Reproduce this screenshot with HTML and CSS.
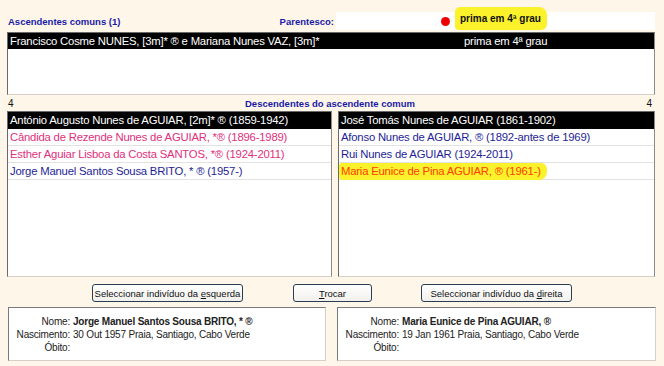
FILE: index.html
```html
<!DOCTYPE html>
<html lang="pt">
  <head>
    <meta charset="UTF-8" />
    <title>Parentesco</title>
    <link rel="stylesheet" href="styles.css">
  </head>
  <body>
    <div class="app">
      <div class="head-row">
        <span class="label title">Ascendentes comuns (1)</span>
        <span class="label parent-label">Parentesco:</span>
        <div class="parent-field">
          <span class="dot"></span>
          <span class="marker">prima em 4ª grau</span>
        </div>
      </div>

      <div class="listbox common">
        <div class="row selected">
          <span class="couple">Francisco Cosme NUNES, [3m]* ® e Mariana Nunes VAZ, [3m]*</span>
          <span class="degree">prima em 4ª grau</span>
        </div>
      </div>

      <div class="count-row">
        <span>4</span>
        <span class="label">Descendentes do ascendente comum</span>
        <span>4</span>
      </div>

      <div class="lists">
        <div class="listbox desc">
          <div class="row selected">António Augusto Nunes de AGUIAR, [2m]* ® (1859-1942)</div>
          <div class="row pink">Cândida de Rezende Nunes de AGUIAR, *® (1896-1989)</div>
          <div class="row pink">Esther Aguiar Lisboa da Costa SANTOS, *® (1924-2011)</div>
          <div class="row blue">Jorge Manuel Santos Sousa BRITO, * ® (1957-)</div>
        </div>
        <div class="listbox desc">
          <div class="row selected">José Tomás Nunes de AGUIAR (1861-1902)</div>
          <div class="row blue">Afonso Nunes de AGUIAR, ® (1892-antes de 1969)</div>
          <div class="row blue">Rui Nunes de AGUIAR (1924-2011)</div>
          <div class="row target"><span class="hl">Maria Eunice de Pina AGUIAR, ® (1961-)</span></div>
        </div>
      </div>

      <div class="buttons">
        <button class="btn wide">Seleccionar indivíduo da <u>e</u>squerda</button>
        <button class="btn swap"><u>T</u>rocar</button>
        <button class="btn wide">Seleccionar indivíduo da <u>d</u>ireita</button>
      </div>

      <div class="details">
        <div class="detail">
          <span class="key">Nome:</span><b>Jorge Manuel Santos Sousa BRITO, * ®</b>
          <span class="key">Nascimento:</span><span>30 Out 1957 Praia, Santiago, Cabo Verde</span>
          <span class="key">Óbito:</span><span></span>
        </div>
        <div class="detail">
          <span class="key">Nome:</span><b>Maria Eunice de Pina AGUIAR, ®</b>
          <span class="key">Nascimento:</span><span>19 Jan 1961 Praia, Santiago, Cabo Verde</span>
          <span class="key">Óbito:</span><span></span>
        </div>
      </div>
    </div>
  </body>
</html>
```

FILE: styles.css
```css
body {
  margin: 0;
  background-color: #fdf6e9;
  font-family: "Liberation Sans", Arial, sans-serif;
  font-size: 10px;
  color: #111;
}
.app {
  width: 648px;
  padding: 12px 9px 0 7px;
}
.label {
  color: #1a1aa8;
  font-weight: bold;
  font-size: 9.5px;
}
.head-row {
  display: flex;
  height: 18px;
  align-items: center;
}
.title {
  flex: 1;
  margin-left: 1px;
}
.parent-label {
  margin-right: 2px;
}
.parent-field {
  width: 319px;
  height: 18px;
  background-color: white;
  display: flex;
  align-items: center;
  padding-left: 105px;
  box-sizing: border-box;
}
.dot {
  width: 9px;
  height: 9px;
  border-radius: 50%;
  background-color: #ee0000;
}
.marker {
  align-self: flex-start;
  margin-top: -5px;
  margin-left: 5px;
  height: 23px;
  line-height: 23px;
  padding: 0 6px 0 5px;
  background-color: #fbf22c;
  border-radius: 5px 8px 6px 4px;
  font-weight: bold;
  color: #111;
}
.listbox {
  background-color: white;
  border: 1px solid;
  border-color: #6a6a6a #8a8a8a #d4d0c8 #6a6a6a;
  box-sizing: border-box;
  font-size: 11.3px;
  letter-spacing: -0.2px;
  overflow: hidden;
}
.common {
  margin-top: 2px;
  height: 63px;
}
.row {
  height: 17px;
  line-height: 16px;
  padding-left: 2px;
  border-bottom: 1px solid #e2e2e2;
  box-sizing: border-box;
  white-space: nowrap;
}
.selected {
  background-color: black;
  color: white;
  border-bottom-color: black;
}
.common .row {
  height: 16px;
  display: flex;
}
.couple {
  width: 454px;
}
.count-row {
  height: 16px;
  display: flex;
  justify-content: space-between;
  align-items: center;
  padding: 0 3px 0 1px;
}
.lists {
  display: grid;
  grid-template-columns: 325px 317px;
  column-gap: 6px;
  height: 166px;
}
.lists .listbox {
  height: 166px;
}
.pink {
  color: #e0307c;
}
.blue {
  color: #1e1e96;
}
.target {
  color: #ff3d00;
}
.hl {
  background-color: #fbf22c;
  padding: 2px 6px 3px 2px;
  margin-left: -2px;
  border-radius: 3px 6px 8px 4px;
}
.buttons {
  display: flex;
  gap: 50px;
  margin-top: 7px;
  padding-left: 85px;
}
.btn {
  height: 18px;
  padding: 0;
  font-family: "Liberation Sans", Arial, sans-serif;
  font-size: 9.5px;
  white-space: nowrap;
  color: #111;
  background: linear-gradient(#ffffff, #f1f0ec);
  border: 1px solid #2a3d52;
  border-radius: 3px;
}
.wide {
  width: 151px;
}
.swap {
  width: 79px;
  margin-right: -1px;
}
.details {
  display: grid;
  grid-template-columns: 318px 319px;
  column-gap: 11px;
  margin-top: 5px;
  margin-left: 1px;
}
.detail {
  height: 54px;
  box-sizing: border-box;
  background-color: white;
  border: 1px solid;
  border-color: #7a7a7a #d4d0c8 #d4d0c8 #7a7a7a;
  padding-top: 7px;
  display: grid;
  grid-template-columns: 61px 1fr;
  column-gap: 3px;
  grid-auto-rows: 13px;
  line-height: 13px;
  letter-spacing: -0.2px;
  color: #222;
}
.key {
  text-align: right;
}
```
